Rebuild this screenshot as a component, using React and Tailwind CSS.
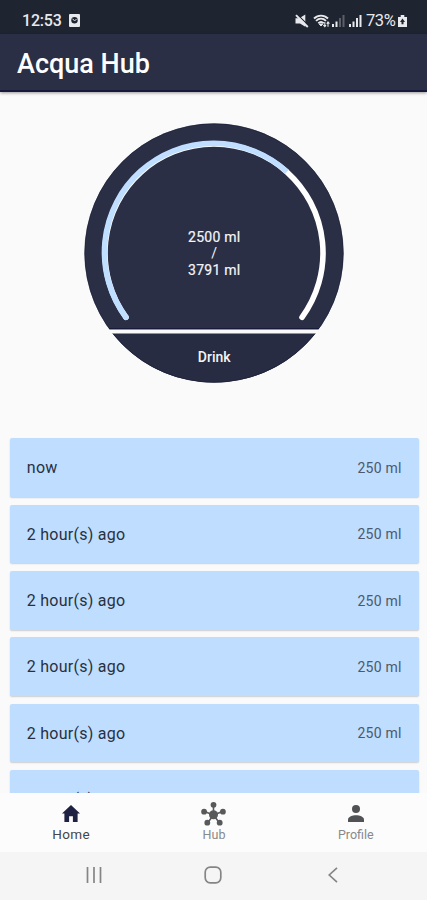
const ENTRIES = [
  'now',
  '2 hour(s) ago',
  '2 hour(s) ago',
  '2 hour(s) ago',
  '2 hour(s) ago',
  '2 hour(s) ago',
];

function StatusBar() {
  return (
    <div className="flex h-[34px] shrink-0 items-center justify-between bg-[#1e2430] pt-[7px] pr-[20px] pl-[22px] text-[#e8e9ec]">
      <div className="flex items-center gap-[7px]">
        <span className="w-[40px] text-[16px] leading-none font-medium tracking-[-0.2px] whitespace-nowrap">12:53</span>
        <svg width="11" height="13" viewBox="0 0 11 13">
          <rect width="11" height="13" rx="1" fill="#e8e9ec" />
          <circle cx="5.5" cy="6.3" r="3.2" fill="#1e2430" />
          <path d="M3.5 5l2 1.5 2-1" stroke="#e8e9ec" strokeWidth="1" fill="none" />
        </svg>
      </div>
      <div className="flex items-center">
        <svg width="14" height="14" viewBox="0 0 14 14" fill="#e8e9ec">
          <path d="M.5 4.2h3.8L10.3.5v12.3L5 9.6H.5z" />
          <path d="M2 .3L13.5 11.5" stroke="#1e2430" strokeWidth="1.2" />
          <path d="M1 1.2L12.8 13" stroke="#e8e9ec" strokeWidth="1.9" />
        </svg>
        <svg className="ml-[4px]" width="17" height="14" viewBox="0 0 17 14" fill="none" stroke="#e8e9ec">
          <path d="M1 4.5C5 .6 11 .6 15 4.5M3 6.9c3-2.9 7-2.9 10 0M5.3 9.2c1.6-1.5 3.8-1.5 5.4 0" strokeWidth="1.9" />
          <path d="M6.3 10l1.7 2 1.7-2z" fill="#e8e9ec" />
          <path d="M11.8 8v4.5m-1.5-1.5l1.5 1.7 1.2-1.5M15 12.7V8.2m-1.2 1.5L15 8l1.4 1.6" strokeWidth="1.1" />
        </svg>
        <svg className="ml-[2px]" width="13" height="13" viewBox="0 0 13 13" fill="#e8e9ec">
          <path d="M0 10h2v3H0zM3.5 7.5h2V13h-2z" />
          <path opacity=".3" d="M7 4h2v9H7zM10.5 1h2v12h-2z" />
        </svg>
        <svg className="ml-[4px]" width="13" height="13" viewBox="0 0 13 13" fill="#e8e9ec">
          <path d="M0 10h2v3H0zM3.5 7.5h2V13h-2zM7 4h2v9H7zM10.5 1h2v12h-2z" />
        </svg>
        <span className="ml-[4px] w-[32px] pt-px text-[16.5px] leading-none tracking-[-0.4px] whitespace-nowrap">73%</span>
        <svg width="9" height="12" viewBox="0 0 9 12">
          <path d="M2.7 0h3.6v2H9v10H0V2h2.7z" fill="#e8e9ec" />
          <path d="M4.5 3.4L2 6.9h1.5v2.3h2V6.9H7z" fill="#1e2430" />
        </svg>
      </div>
    </div>
  );
}

function Gauge() {
  return (
    <div className="mx-auto mt-[30.6px] grid h-[260px] w-[260px] shrink-0">
      <svg className="col-start-1 row-start-1" width="260" height="260" viewBox="0 0 260 260" fill="none">
        <circle cx="130" cy="130" r="129.5" fill="#2a2f45" />
        <path d="M27.4 209A129.5 129.5 0 0 0 232.6 209Z" fill="#272c42" />
        <circle cx="130" cy="130" r="129.2" stroke="#1a1e38" strokeWidth="0.6" />
        <path d="M42 194.3A109 109 0 1 1 218 194.3" stroke="#fff" strokeWidth="5.6" strokeLinecap="round" />
        <path d="M42 194.3A109 109 0 0 1 203 48.8" stroke="#c0deff" strokeWidth="5.6" />
        <circle cx="42" cy="194.3" r="2.8" fill="#c0deff" />
        <path d="M25 205.6H235" stroke="#171a38" strokeWidth="1.4" />
        <path d="M24 208.4H236" stroke="#fafafa" strokeWidth="4" />
      </svg>
      <div className="col-start-1 row-start-1 flex flex-col items-center pt-[106.4px] pl-[1.5px] text-[14px] leading-[16.5px] text-[#f4f5f7]">
        <span className="tracking-[0.25px] [-webkit-text-stroke:0.2px_#f4f5f7]">2500 ml</span>
        <span>/</span>
        <span className="tracking-[0.25px] [-webkit-text-stroke:0.2px_#f4f5f7]">3791 ml</span>
        <span className="mt-[70.5px] font-medium">Drink</span>
      </div>
    </div>
  );
}

function HubIcon() {
  return (
    <svg width="26" height="26" viewBox="0 0 26 26" fill="#58595b">
      <path d="M13 14V4M13 14L4 10.5M13 14l9-3.5M13 14l-6 8M13 14l6 8" stroke="#58595b" strokeWidth="1.6" />
      <circle cx="13" cy="13.8" r="4.5" />
      <circle cx="13" cy="3.8" r="2.9" />
      <circle cx="3.6" cy="10.7" r="2.9" />
      <circle cx="22.4" cy="10.7" r="2.9" />
      <circle cx="6.8" cy="21.7" r="2.9" />
      <circle cx="19.2" cy="21.7" r="2.9" />
    </svg>
  );
}

function TabBar() {
  return (
    <nav className="grid h-[59px] shrink-0 grid-cols-3 bg-[#fcfcfc] text-[12.5px] leading-[16px] text-[#88898b]">
      <div className="flex flex-col items-center text-[#454649]">
        <span className="flex h-[33px] items-center pt-[7px]">
          <svg width="18" height="17" viewBox="0 0 18 17" fill="#1e2142">
            <path d="M9 0L0 8.6h2.4V17h4.7v-5.7h3.8V17h4.7V8.6H18z" />
          </svg>
        </span>
        <span className="text-[13.5px] tracking-[0.4px]">Home</span>
      </div>
      <div className="flex translate-x-[0.5px] flex-col items-center">
        <span className="flex h-[34px] items-center pt-[7px]"><HubIcon /></span>
        <span className="tracking-[0.1px]">Hub</span>
      </div>
      <div className="flex flex-col items-center">
        <span className="flex h-[34px] items-center pt-[7px]">
          <svg width="16" height="17" viewBox="0 0 16 17" fill="#515254">
            <circle cx="8" cy="4" r="4" />
            <path d="M0 17v-2.4C0 11.8 4.6 10.3 8 10.3s8 1.5 8 4.3V17z" />
          </svg>
        </span>
        <span>Profile</span>
      </div>
    </nav>
  );
}

function SystemBar() {
  return (
    <div className="flex h-[48px] shrink-0 items-center bg-[#f5f5f5] pl-[86px]">
      <svg width="16" height="16" viewBox="0 0 16 16" className="-mt-[3px]" stroke="#858585" strokeWidth="1.7">
        <path d="M1.5 0v16M8 0v16M14.5 0v16" />
      </svg>
      <svg width="18" height="18" viewBox="0 0 18 18" className="-mt-[3px] ml-[102px]" fill="none" stroke="#858585" strokeWidth="1.7">
        <rect x="1.2" y="1.2" width="15.6" height="15.6" rx="5" />
      </svg>
      <svg width="10" height="16" viewBox="0 0 10 16" className="-mt-[3px] ml-[106px]" fill="none" stroke="#858585" strokeWidth="1.7">
        <path d="M9 .8L1.2 8 9 15.2" />
      </svg>
    </div>
  );
}

export default function App() {
  return (
    <div className="flex h-[900px] w-[427px] flex-col overflow-hidden bg-[#fafafa] font-[Roboto,'Liberation_Sans',sans-serif]">
      <StatusBar />
      <header className="z-10 flex h-[58px] shrink-0 items-center border-b-2 border-[#17193a] bg-[#2a2f45] pl-[17px] shadow-[0_1px_3px_rgba(0,0,0,0.4)]">
        <h1 className="pt-[4px] text-[27px] leading-none font-medium text-white">Acqua Hub</h1>
      </header>
      <main className="flex min-h-0 flex-1 flex-col overflow-hidden">
        <Gauge />
        <ul className="mt-[55.8px] flex flex-col gap-[7.6px] pr-[8.5px] pl-[9.8px]">
          {ENTRIES.map((label, index) => (
            <li
              key={index}
              className="flex h-[58.7px] shrink-0 items-center justify-between rounded-[2px] bg-[#bfddff] px-[17px] pt-[1.5px] shadow-[0_1px_1.5px_rgba(60,70,90,0.25)]"
            >
              <span className="text-[16px] tracking-[0.25px] text-[#27313f]">{label}</span>
              <span className="text-[14px] tracking-[0.2px] text-[#4b596e]">250 ml</span>
            </li>
          ))}
        </ul>
      </main>
      <TabBar />
      <SystemBar />
    </div>
  );
}
